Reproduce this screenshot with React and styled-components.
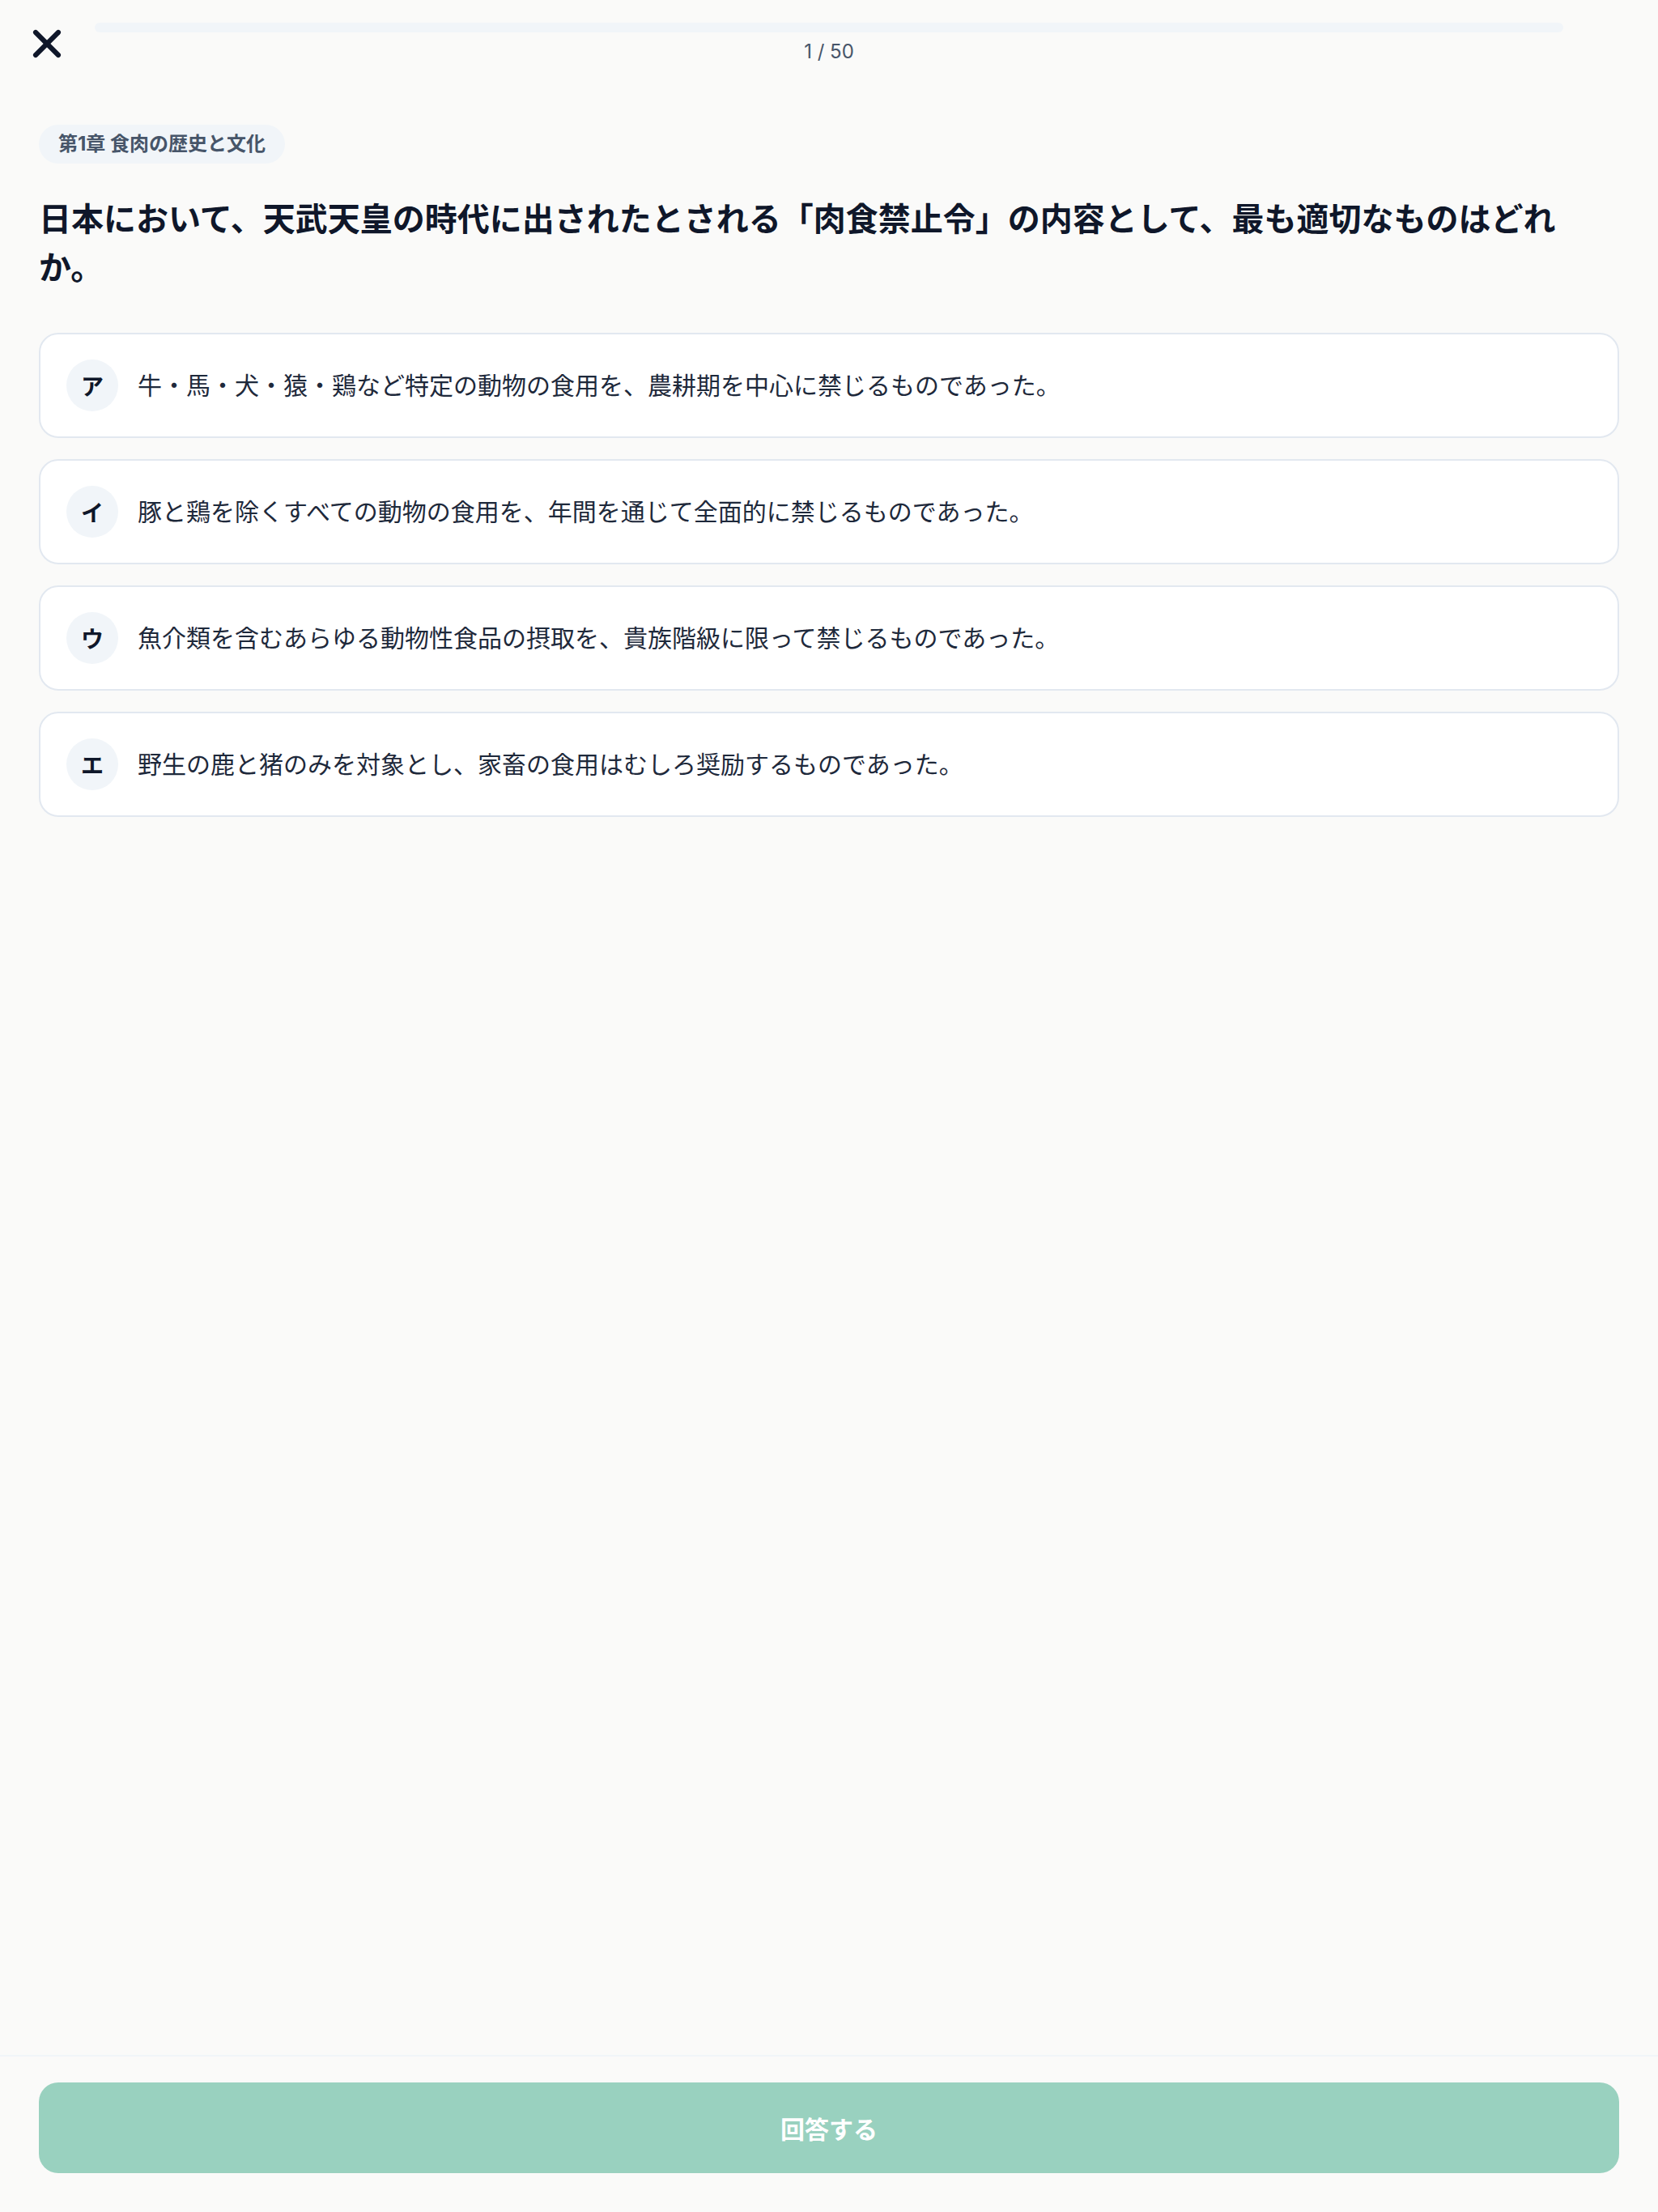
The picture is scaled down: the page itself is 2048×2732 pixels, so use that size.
import React from "react";
import styled, { createGlobalStyle } from "styled-components";

const Global = createGlobalStyle`
  html, body { margin: 0; padding: 0; background: #fafaf9; }
  body {
    font-family: Inter, "Noto Sans CJK JP", "Noto Sans", sans-serif;
    color: #0f172a;
    -webkit-font-smoothing: antialiased;
  }
  * { box-sizing: border-box; }
`;

const Page = styled.div`
  min-height: 100vh;
  display: flex;
  flex-direction: column;
  background: #fafaf9;
`;

const Header = styled.header`
  display: flex;
  align-items: center;
  gap: 31px;
  padding: 26px 117px 0 30px;
`;

const CloseButton = styled.button`
  width: 56px;
  height: 56px;
  padding: 0;
  border: none;
  background: transparent;
  display: flex;
  align-items: center;
  justify-content: center;
  color: #0f172a;
  cursor: pointer;
  flex-shrink: 0;
`;

const ProgressColumn = styled.div`
  flex: 1;
  display: flex;
  flex-direction: column;
  align-items: center;
  gap: 8px;
`;

const Track = styled.div`
  width: 100%;
  height: 12px;
  border-radius: 6px;
  background: #f1f5f9;
  overflow: hidden;
`;

const Counter = styled.div`
  font-size: 24px;
  line-height: 32px;
  color: #475569;
  font-weight: 400;
`;

const Main = styled.main`
  flex: 1;
  padding: 72px 48px 48px;
  display: flex;
  flex-direction: column;
  align-items: flex-start;
`;

const Chapter = styled.span`
  display: inline-flex;
  align-items: center;
  height: 48px;
  padding: 0 24px;
  border-radius: 24px;
  background: #f1f5f9;
  color: #475569;
  font-size: 24px;
  font-weight: 700;
  line-height: 32px;
  margin-bottom: 39px;
`;

const Question = styled.h1`
  margin: 0 0 50px;
  font-size: 40px;
  line-height: 60px;
  font-weight: 700;
  color: #0f172a;
  width: 100%;
`;

const Options = styled.div`
  width: 100%;
  display: flex;
  flex-direction: column;
  gap: 26px;
`;

const Option = styled.button`
  width: 100%;
  display: flex;
  align-items: center;
  gap: 24px;
  padding: 31px 32px;
  background: #ffffff;
  border: 2px solid #e2e8f0;
  border-radius: 24px;
  text-align: left;
  font-family: inherit;
  cursor: pointer;
`;

const Letter = styled.span`
  width: 64px;
  height: 64px;
  border-radius: 50%;
  background: #f1f5f9;
  color: #0f172a;
  display: flex;
  align-items: center;
  justify-content: center;
  font-size: 28px;
  font-weight: 700;
  flex-shrink: 0;
`;

const OptionText = styled.span`
  font-size: 30px;
  line-height: 44px;
  color: #1e293b;
  font-weight: 400;
`;

const Footer = styled.footer`
  border-top: 2px solid #f1f5f9;
  padding: 32px 48px 48px;
  background: #fafaf9;
`;

const Submit = styled.button`
  width: 100%;
  height: 112px;
  border: none;
  border-radius: 24px;
  background: #99d1bf;
  color: #ffffff;
  font-family: inherit;
  font-size: 30px;
  font-weight: 700;
  cursor: not-allowed;
`;

const options = [
  { key: "ア", text: "牛・馬・犬・猿・鶏など特定の動物の食用を、農耕期を中心に禁じるものであった。" },
  { key: "イ", text: "豚と鶏を除くすべての動物の食用を、年間を通じて全面的に禁じるものであった。" },
  { key: "ウ", text: "魚介類を含むあらゆる動物性食品の摂取を、貴族階級に限って禁じるものであった。" },
  { key: "エ", text: "野生の鹿と猪のみを対象とし、家畜の食用はむしろ奨励するものであった。" },
];

export default function App() {
  return (
    <>
      <Global />
      <Page>
        <Header>
          <CloseButton aria-label="閉じる">
            <svg width="56" height="56" viewBox="0 0 24 24" fill="none" stroke="currentColor" strokeWidth="2.6" strokeLinecap="round" strokeLinejoin="round">
              <path d="M18 6 6 18" />
              <path d="m6 6 12 12" />
            </svg>
          </CloseButton>
          <ProgressColumn>
            <Track />
            <Counter>1 / 50</Counter>
          </ProgressColumn>
        </Header>
        <Main>
          <Chapter>第1章 食肉の歴史と文化</Chapter>
          <Question>日本において、天武天皇の時代に出されたとされる「肉食禁止令」の内容として、最も適切なものはどれか。</Question>
          <Options>
            {options.map((o) => (
              <Option key={o.key}>
                <Letter>{o.key}</Letter>
                <OptionText>{o.text}</OptionText>
              </Option>
            ))}
          </Options>
        </Main>
        <Footer>
          <Submit disabled>回答する</Submit>
        </Footer>
      </Page>
    </>
  );
}
